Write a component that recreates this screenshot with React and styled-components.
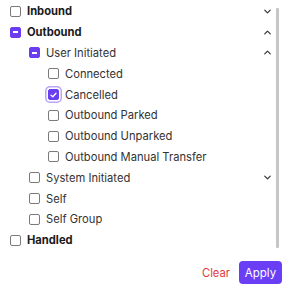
import React from "react";
import styled, { createGlobalStyle } from "styled-components";
import { ChevronDown, ChevronUp } from "lucide-react";

const Global = createGlobalStyle`
  html, body { margin: 0; padding: 0; background: #fff; }
  body { font-family: Inter, "Noto Sans", sans-serif; }
`;

const Panel = styled.div`
  width: 286px;
  height: 291px;
  box-sizing: border-box;
  display: flex;
  flex-direction: column;
`;

const ScrollArea = styled.div`
  display: flex;
  padding: 1px 0 0 10px;
  height: 250px;
`;

const List = styled.div`
  flex: 1;
  display: flex;
  flex-direction: column;
`;

const ScrollBar = styled.div`
  width: 3px;
  margin: 7px 7px 0 3px;
  height: 240px;
  background: #c6c6c6;
  border-radius: 1px;
`;

const Row = styled.div`
  height: 20.8px;
  display: flex;
  align-items: center;
  padding-left: ${(p) => p.$level * 19}px;
`;

const Box = styled.span`
  width: 11px;
  height: 11px;
  box-sizing: border-box;
  border-radius: 2px;
  flex: none;
  display: flex;
  align-items: center;
  justify-content: center;
  border: 1px solid ${(p) => (p.$state === "none" ? "#7a7a7a" : "#6a3ef0")};
  background: ${(p) => (p.$state === "none" ? "#fff" : "#6a3ef0")};
  box-shadow: ${(p) => (p.$focus ? "0 0 0 1.5px #fff, 0 0 0 3px #b9a6f7" : "none")};
`;

const Dash = styled.span`
  width: 5px;
  height: 1.5px;
  background: #fff;
`;

const Label = styled.span`
  margin-left: 6px;
  font-size: 11.2px;
  color: ${(p) => (p.$bold ? "#1a1a1a" : "#333")};
  font-weight: ${(p) => (p.$bold ? 700 : 400)};
  white-space: nowrap;
  flex: 1;
`;

const Toggle = styled.span`
  width: 12px;
  display: flex;
  align-items: center;
  justify-content: center;
  color: #333;
`;

const Footer = styled.div`
  display: flex;
  justify-content: flex-end;
  align-items: center;
  gap: 9px;
  padding: 10px 4px 0 0;
`;

const ClearBtn = styled.button`
  background: none;
  border: none;
  padding: 0;
  font-family: Inter, sans-serif;
  font-size: 11.2px;
  color: #e5383b;
`;

const ApplyBtn = styled.button`
  background: #6a3ef5;
  border: none;
  border-radius: 4px;
  height: 23px;
  width: 43px;
  padding: 0;
  font-family: Inter, sans-serif;
  font-size: 11.5px;
  color: #fff;
`;

const rows = [
  { label: "Inbound", level: 0, bold: true, state: "none", chevron: "down" },
  { label: "Outbound", level: 0, bold: true, state: "mixed", chevron: "up" },
  { label: "User Initiated", level: 1, state: "mixed", chevron: "up" },
  { label: "Connected", level: 2, state: "none" },
  { label: "Cancelled", level: 2, state: "checked", focus: true },
  { label: "Outbound Parked", level: 2, state: "none" },
  { label: "Outbound Unparked", level: 2, state: "none" },
  { label: "Outbound Manual Transfer", level: 2, state: "none" },
  { label: "System Initiated", level: 1, state: "none", chevron: "down" },
  { label: "Self", level: 1, state: "none" },
  { label: "Self Group", level: 1, state: "none" },
  { label: "Handled", level: 0, bold: true, state: "none" },
];

function Check({ state, focus }) {
  return (
    <Box $state={state} $focus={focus}>
      {state === "mixed" && <Dash />}
      {state === "checked" && (
        <svg width="7" height="6" viewBox="0 0 7 6">
          <path d="M1 3.2 L2.8 4.8 L6 1.2" fill="none" stroke="#fff" strokeWidth="1.3" strokeLinecap="round" strokeLinejoin="round" />
        </svg>
      )}
    </Box>
  );
}

export default function App() {
  return (
    <Panel>
      <Global />
      <ScrollArea>
        <List>
          {rows.map((r) => (
            <Row key={r.label} $level={r.level}>
              <Check state={r.state} focus={r.focus} />
              <Label $bold={r.bold}>{r.label}</Label>
              {r.chevron && (
                <Toggle>
                  {r.chevron === "down" ? (
                    <ChevronDown size={11} strokeWidth={2.6} />
                  ) : (
                    <ChevronUp size={11} strokeWidth={2.6} />
                  )}
                </Toggle>
              )}
            </Row>
          ))}
        </List>
        <ScrollBar />
      </ScrollArea>
      <Footer>
        <ClearBtn>Clear</ClearBtn>
        <ApplyBtn>Apply</ApplyBtn>
      </Footer>
    </Panel>
  );
}
